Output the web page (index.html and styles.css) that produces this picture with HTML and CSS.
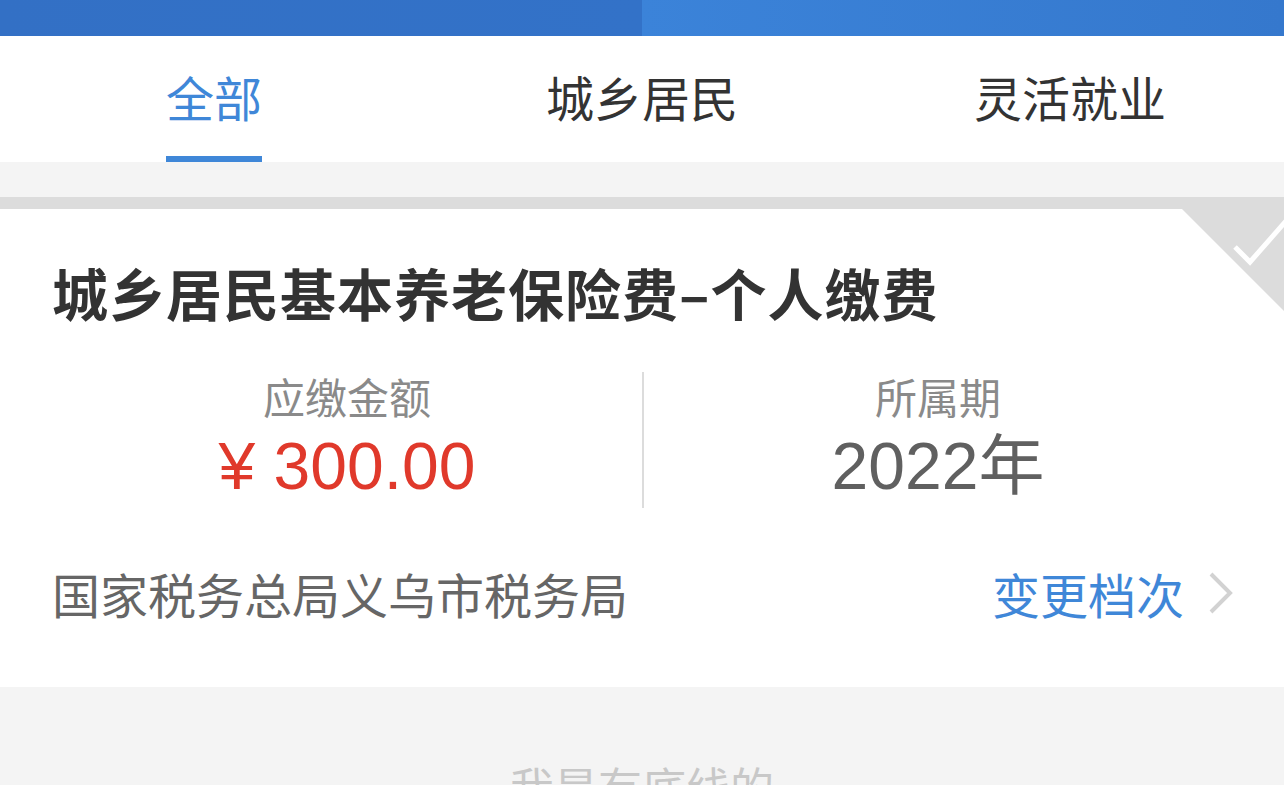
FILE: index.html
```html
<!DOCTYPE html>
<html lang="zh-CN">
<head>
    <meta charset="UTF-8">
    <meta name="viewport" content="width=device-width, initial-scale=1.0">
    <title>社保缴费</title>
    <link rel="stylesheet" href="styles.css">
</head>
<body>

    <div class="top-bar"></div>

    <div class="tabs">
        <div class="tab active">全部</div>
        <div class="tab">城乡居民</div>
        <div class="tab">灵活就业</div>
    </div>

    <div class="gap"></div>

    <div class="card">
        <!-- 右上角选中标记 -->
        <svg class="corner" width="102" height="102" viewBox="0 0 102 102">
            <polygon points="0,0 102,0 102,102" fill="#dcdcdc"/>
            <polyline points="53,38 68,53 104,12" fill="none" stroke="#fff" stroke-width="5"/>
        </svg>

        <div class="card-title">城乡居民基本养老保险费–个人缴费</div>

        <div class="info">
            <div class="info-col">
                <div class="label">应缴金额</div>
                <div class="value amount">¥ 300.00</div>
            </div>
            <div class="info-col right">
                <div class="label">所属期</div>
                <div class="value">2022年</div>
            </div>
        </div>

        <div class="card-foot">
            <div class="org">国家税务总局义乌市税务局</div>
            <a class="change" href="#">
                变更档次
                <svg width="26" height="44" viewBox="0 0 26 44">
                    <polyline points="3,3 22,22 3,41" fill="none" stroke="#d2d2d2" stroke-width="4"/>
                </svg>
            </a>
        </div>
    </div>

    <div class="bottom-line">我是有底线的</div>

</body>
</html>
```

FILE: styles.css
```css
body {
    margin: 0;
    padding: 0;
    background: #f4f4f4;
    font-family: "Noto Sans CJK SC", sans-serif;
    overflow: hidden;
}

.top-bar {
    height: 36px;
    background: linear-gradient(to right, #3370c5 0, #3372c8 50%, #3b83d9 50%, #3578cd 100%);
}

.tabs {
    display: grid;
    grid-template-columns: repeat(3, 1fr);
    height: 126px;
    background: #fff;
}

.tab {
    position: relative;
    display: flex;
    align-items: center;
    justify-content: center;
    padding-bottom: 6px;
    font-size: 48px;
    line-height: 48px;
    color: #333;
}

.tab.active {
    color: #3f87d8;
}

.tab.active::after {
    content: "";
    position: absolute;
    left: 50%;
    bottom: 0;
    width: 96px;
    height: 6px;
    margin-left: -48px;
    background: #3f87d8;
}

.gap {
    height: 35px;
}

.card {
    position: relative;
    padding: 55px 52px 46px;
    background: #fff;
    border-top: 12px solid #dcdcdc;
}

.corner {
    position: absolute;
    top: 0;
    right: 0;
    display: block;
}

.card-title {
    font-size: 56px;
    line-height: 56px;
    font-weight: bold;
    letter-spacing: 1px;
    color: #333;
}

.info {
    display: grid;
    grid-template-columns: 1fr 1fr;
    height: 136px;
    margin-top: 52px;
}

.info-col {
    display: flex;
    flex-direction: column;
    align-items: center;
}

.info-col.right {
    border-left: 2px solid #dcdcdc;
}

.label {
    margin-top: 3px;
    font-size: 42px;
    line-height: 42px;
    color: #8a8a8a;
}

.value {
    margin-top: 16px;
    font-family: "Liberation Sans", "Noto Sans CJK SC", sans-serif;
    font-size: 66px;
    line-height: 66px;
    color: #606060;
}

.value.amount {
    color: #e0392b;
}

.card-foot {
    display: flex;
    align-items: center;
    justify-content: space-between;
    height: 96px;
    margin-top: 37px;
}

.org {
    font-size: 48px;
    line-height: 48px;
    color: #666;
}

.change {
    display: flex;
    align-items: center;
    gap: 24px;
    font-size: 48px;
    line-height: 48px;
    color: #3f87d8;
    text-decoration: none;
}

.change svg {
    display: block;
    margin-right: -2px;
}

.bottom-line {
    padding-top: 77px;
    text-align: center;
    font-size: 44px;
    line-height: 44px;
    color: #c8c8c8;
}
```
